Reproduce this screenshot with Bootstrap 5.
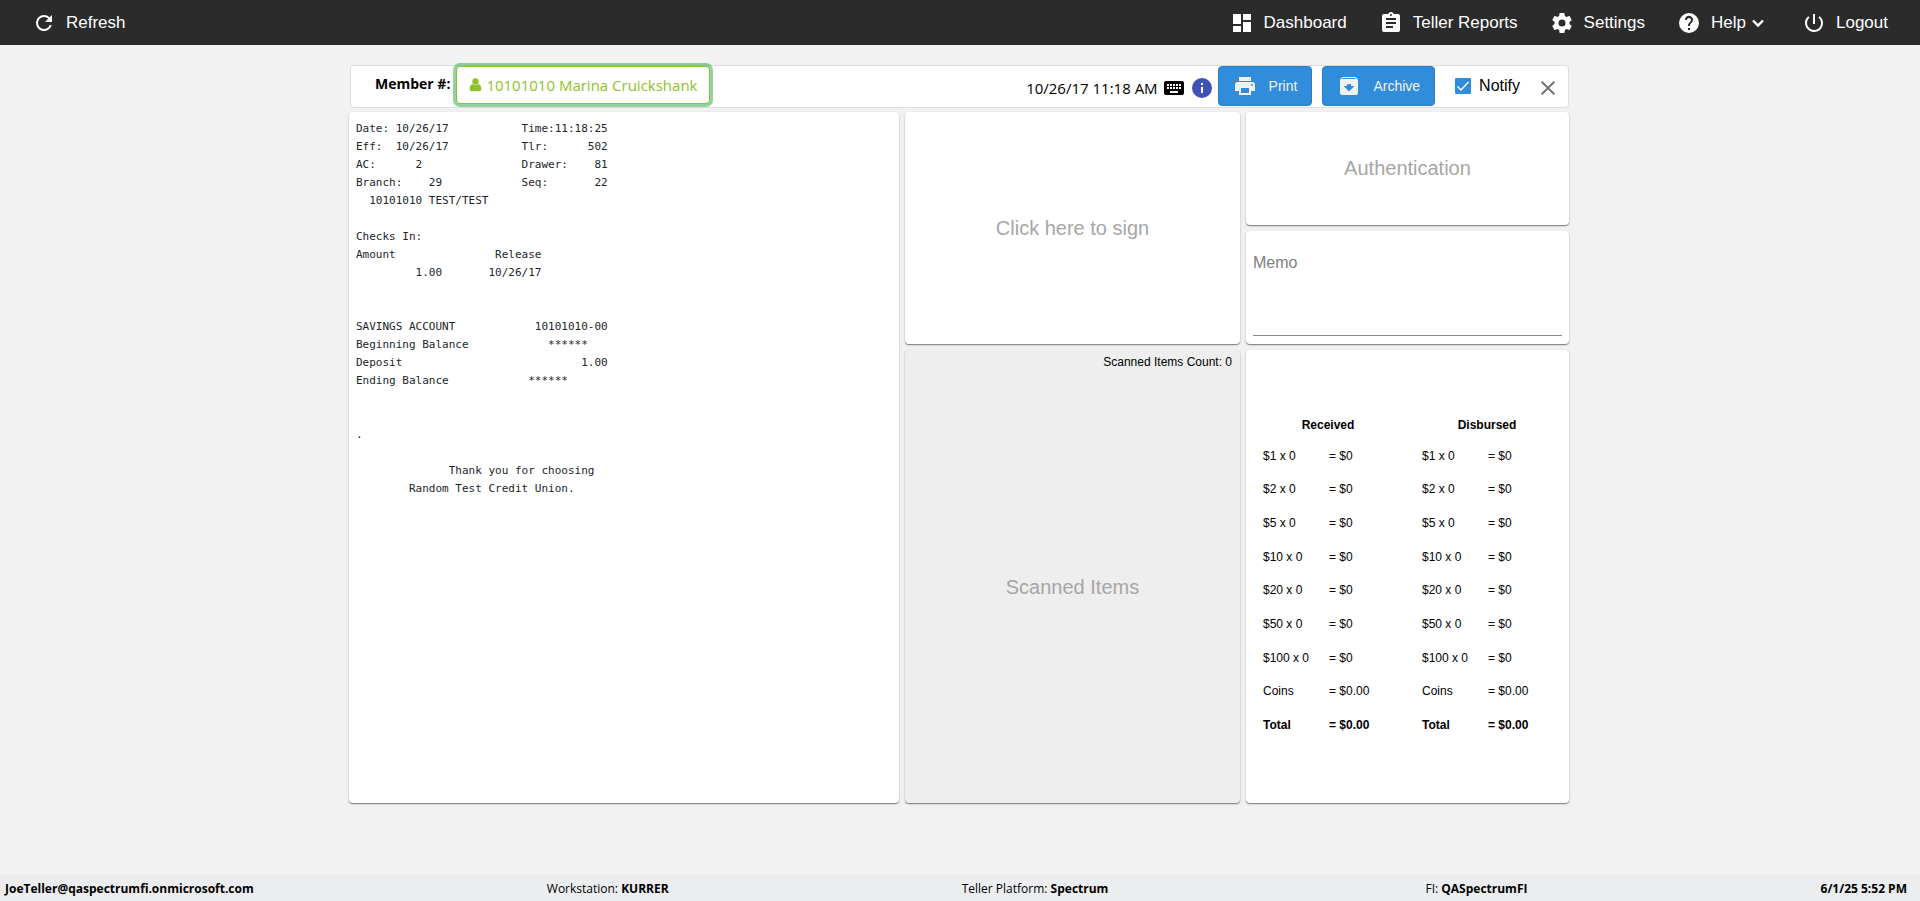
<!DOCTYPE html>
<html lang="en">
<head>
<meta charset="utf-8">
<meta name="viewport" content="width=device-width, initial-scale=1">
<title>Teller Receipt</title>
<link href="https://cdn.jsdelivr.net/npm/bootstrap@5.3.0/dist/css/bootstrap.min.css" rel="stylesheet">
<style>
  body { background: #f2f2f2; color: #000; font-family: "Liberation Sans", Arial, sans-serif; font-size: 16px; }
  .ui-face { font-family: "Open Sans", "Noto Sans", sans-serif; font-size: 15px; }

  .topbar { background: #2b2b2b; min-height: 45px; font-size: 17px; line-height: 24px; }
  .topbar .nav-link { color: #fff; padding: 7px 16px; gap: 10px; }
  .topbar .nav-link svg { fill: #fff; }

  .workspace { max-width: 1222px; padding: 20px 2px 0 0; }
  .receipt-bar { background: #fff; border: 1px solid #ddd; border-radius: 4px; min-height: 43px; margin: 0 0 4px 1px; }
  .member-group { gap: 6px; }
  .member-label { font-size: 14px; }
  .btn-member { color: #8fc12b; background: #fff; border: 1px solid #8fc12b; border-radius: 4px; height: 38px;
                padding: 0 12px; box-shadow: 0 0 0 3px rgba(40, 167, 69, .5); gap: 4px; }
  .btn-member:hover { color: #7fae22; border-color: #8fc12b; }
  .btn-action { background: #2f8ddc; border: 1px solid #2a7fc7; border-radius: 4px; color: #f2f2f2; font-size: 14px;
                height: 40px; padding: 0 14px; gap: 12px; }
  .btn-action:hover { background: #277fc9; color: #fff; }
  .btn-bare { border: 0; background: none; padding: 0; line-height: 0; }
  .bar-actions { gap: 10px; }
  .notify-box { width: 16px; height: 16px; margin: 0; }
  .notify-box[type=checkbox] { border-radius: 1px; }
  .notify-box:checked[type=checkbox] { background-color: #2f8ddc; border-color: #2f8ddc; background-size: 16px;
    background-image: url("data:image/svg+xml,%3Csvg xmlns='http://www.w3.org/2000/svg' viewBox='0 0 16 16'%3E%3Cpath d='M2.500 8.500 6 12 13.500 4' fill='none' stroke='%23fff' stroke-width='1.500'/%3E%3C/svg%3E"); }

  .board { display: grid; gap: 6px; grid-template-columns: 550fr 335fr 323fr; grid-template-rows: auto auto 1fr; }
  .panel { background: #fff; border-radius: 4px; box-shadow: 0 1px 1px rgba(0, 0, 0, .4), 0 1px 3px rgba(0, 0, 0, .16); }
  .panel-receipt { grid-row: 1 / 4; }
  .panel-sign { grid-row: 1 / 3; grid-column: 2; }
  .panel-auth { grid-column: 3; min-height: 113px; }
  .panel-memo { grid-column: 3; min-height: 113px; padding: 8px 7px; }
  .panel-scan { grid-column: 2; background: #eee; }
  .panel-cash { grid-column: 3; min-height: 453px; padding: 62px 17px 40px; gap: 29px; }
  .prompt { font-size: 20px; color: #a6a6a6; background: none; border: 0; padding: 0 0 1px; }
  .receipt-text { font-family: "DejaVu Sans Mono", monospace; font-size: 11px; line-height: 18px; color: #212529; padding: 8px 7px; }
  .memo-input { border: 0; border-bottom: 1px solid #8c8c8c; resize: none; height: 85px; padding: 0; line-height: 24px; }
  .memo-input::placeholder { color: #808080; }

  .cash-table { font-size: 12px; line-height: 18px; width: 130px; height: 330px; }
  .cash-table th, .cash-table td { padding: 0; vertical-align: middle; }
  .cash-table thead th { height: 27px; padding-top: 4px; text-align: center; vertical-align: top; }
  .cash-table td:first-child { width: 66px; }
  .scan-count { font-size: 12px; line-height: 18px; padding: 3px 8px 0; }

  .statusbar { background: #ebedef; min-height: 26px; font-size: 12px; line-height: 18px; padding: 2px 13px 0 5px; }
</style>
</head>
<body class="d-flex flex-column min-vh-100">

<nav class="topbar d-flex justify-content-between px-3">
  <a class="nav-link d-flex align-items-center" href="#">
    <svg width="24" height="24" viewBox="0 0 24 24" aria-hidden="true"><path d="M17.65 6.35A7.96 7.96 0 0 0 12 4a8 8 0 1 0 7.73 10h-2.08A6 6 0 1 1 12 6c1.66 0 3.14.69 4.22 1.78L13 11h7V4z"/></svg>
    Refresh
  </a>
  <div class="d-flex">
    <a class="nav-link d-flex align-items-center" href="#">
      <svg width="24" height="24" viewBox="0 0 24 24" aria-hidden="true"><path d="M3 13h8V3H3zm0 8h8v-6H3zm10 0h8V11h-8zm0-18v6h8V3z"/></svg>
      Dashboard
    </a>
    <a class="nav-link d-flex align-items-center" href="#">
      <svg width="24" height="24" viewBox="0 0 24 24" aria-hidden="true"><path d="M19 3h-4.18C14.4 1.84 13.3 1 12 1s-2.4.84-2.82 2H5a2 2 0 0 0-2 2v14a2 2 0 0 0 2 2h14a2 2 0 0 0 2-2V5a2 2 0 0 0-2-2zm-7 0a1 1 0 1 1 0 2 1 1 0 0 1 0-2zm2 14H7v-2h7zm3-4H7v-2h10zm0-4H7V7h10z"/></svg>
      Teller Reports
    </a>
    <a class="nav-link d-flex align-items-center" href="#">
      <svg width="24" height="24" viewBox="0 0 24 24" aria-hidden="true"><path d="M19.43 12.98c.04-.32.07-.64.07-.98s-.03-.66-.07-.98l2.11-1.65c.19-.15.24-.42.12-.64l-2-3.46c-.12-.22-.39-.3-.61-.22l-2.49 1c-.52-.4-1.08-.73-1.69-.98l-.38-2.65A.49.49 0 0 0 14 2h-4c-.25 0-.46.18-.49.42l-.38 2.65c-.61.25-1.17.59-1.69.98l-2.49-1c-.23-.09-.49 0-.61.22l-2 3.46c-.13.22-.07.49.12.64l2.11 1.65c-.04.32-.07.65-.07.98s.03.66.07.98l-2.11 1.65c-.19.15-.24.42-.12.64l2 3.46c.12.22.39.3.61.22l2.49-1c.52.4 1.08.73 1.69.98l.38 2.65c.03.24.24.42.49.42h4c.25 0 .46-.18.49-.42l.38-2.65c.61-.25 1.17-.59 1.69-.98l2.49 1c.23.09.49 0 .61-.22l2-3.46c.12-.22.07-.49-.12-.64zM12 15.5a3.5 3.5 0 1 1 0-7 3.5 3.5 0 0 1 0 7z"/></svg>
      Settings
    </a>
    <a class="nav-link d-flex align-items-center" href="#">
      <svg width="24" height="24" viewBox="0 0 24 24" aria-hidden="true"><path d="M12 2a10 10 0 1 0 0 20 10 10 0 0 0 0-20zm1 17h-2v-2h2zm2.07-7.75-.9.92C13.45 12.9 13 13.5 13 15h-2v-.5c0-1.1.45-2.1 1.17-2.83l1.24-1.26A2 2 0 1 0 10 9H8a4 4 0 1 1 7.07 2.25z"/></svg>
      <span class="d-flex align-items-center">Help
        <svg class="ms-1" width="20" height="18" viewBox="0 0 20 18" aria-hidden="true"><path d="M3 6.500 8 11.500 13 6.500" style="fill:none;stroke:#fff;stroke-width:2.400"/></svg>
      </span>
    </a>
    <a class="nav-link d-flex align-items-center" href="#">
      <svg width="24" height="24" viewBox="0 0 24 24" aria-hidden="true"><path d="M13 3h-2v10h2zm4.830 2.170-1.420 1.420A6.920 6.920 0 0 1 19 12a7 7 0 1 1-11.420-5.420L6.170 5.170A8.930 8.930 0 0 0 3 12a9 9 0 1 0 14.830-6.830z"/></svg>
      Logout
    </a>
  </div>
</nav>

<main class="workspace w-100 mx-auto flex-grow-1">
  <div class="receipt-bar d-flex align-items-start justify-content-between">
    <div class="ui-face member-group d-flex align-items-center ps-4">
      <label class="member-label fw-bold pb-1" for="member">Member #:</label>
      <button id="member" type="button" class="btn btn-member ui-face d-flex align-items-center">
        <svg width="13" height="14" viewBox="0 0 13 14" fill="currentColor" aria-hidden="true"><circle cx="6.500" cy="3.500" r="3.200"/><path d="M3.600 6C1.500 6.500.700 8.500.700 11c0 1.300.900 2.300 2.100 2.300h7.400c1.200 0 2.100-1 2.100-2.300 0-2.500-.800-4.500-2.900-5a4.300 4.300 0 0 1-5.800 0z"/></svg>
        10101010 Marina Cruickshank
      </button>
    </div>
    <div class="d-flex align-items-center">
      <span class="ui-face pt-1">10/26/17 11:18 AM</span>
      <button type="button" class="btn-bare ms-1 pt-1" aria-label="Keyboard"><svg width="24" height="24" viewBox="0 0 24 24"><path d="M20 5H4a2 2 0 0 0-2 2v10a2 2 0 0 0 2 2h16a2 2 0 0 0 2-2V7a2 2 0 0 0-2-2zm-9 3h2v2h-2zm0 3h2v2h-2zM8 8h2v2H8zm0 3h2v2H8zm-1 2H5v-2h2zm0-3H5V8h2zm9 7H8v-2h8zm0-4h-2v-2h2zm0-3h-2V8h2zm3 3h-2v-2h2zm0-3h-2V8h2z"/></svg></button>
      <button type="button" class="btn-bare ms-1 pt-1" aria-label="Info"><svg width="24" height="24" viewBox="0 0 24 24" fill="#3f51b5"><path d="M12 2a10 10 0 1 0 0 20 10 10 0 0 0 0-20zm1 15h-2v-6h2zm0-8h-2V7h2z"/></svg></button>
      <div class="bar-actions d-flex align-items-center ms-1">
        <button type="button" class="btn btn-action d-flex align-items-center">
          <svg width="24" height="24" viewBox="0 0 24 24" fill="currentColor" aria-hidden="true"><path d="M19 8H5a3 3 0 0 0-3 3v6h4v4h12v-4h4v-6a3 3 0 0 0-3-3zm-3 11H8v-5h8zm3-7a1 1 0 1 1 0-2 1 1 0 0 1 0 2zm-1-9H6v4h12z"/></svg>
          Print
        </button>
        <button type="button" class="btn btn-action d-flex align-items-center">
          <svg width="24" height="24" viewBox="0 0 24 24" fill="currentColor" aria-hidden="true"><path d="m20.540 5.230-1.390-1.680A1.450 1.450 0 0 0 18 3H6c-.470 0-.880.210-1.160.550L3.460 5.230C3.170 5.570 3 6.020 3 6.500V19a2 2 0 0 0 2 2h14a2 2 0 0 0 2-2V6.500c0-.480-.170-.930-.460-1.270zM12 17.500 6.500 12H10v-2h4v2h3.500zM5.120 5l.810-1h12l.940 1z"/></svg>
          Archive
        </button>
      </div>
      <div class="d-flex align-items-center gap-2 ms-3 ps-1">
        <input class="form-check-input notify-box" type="checkbox" id="notify" checked>
        <label for="notify">Notify</label>
      </div>
      <button type="button" class="btn-bare ms-3 me-2 pt-1" aria-label="Close"><svg width="24" height="24" viewBox="0 0 24 24" fill="#757575"><path d="M19 6.410 17.590 5 12 10.590 6.410 5 5 6.410 10.590 12 5 17.590 6.410 19 12 13.410 17.590 19 19 17.590 13.410 12z"/></svg></button>
    </div>
  </div>

  <div class="board">
    <section class="panel panel-receipt">
      <pre class="receipt-text m-0">Date: 10/26/17           Time:11:18:25
Eff:  10/26/17           Tlr:      502
AC:      2               Drawer:    81
Branch:    29            Seq:       22
  10101010 TEST/TEST

Checks In:
Amount               Release
         1.00       10/26/17


SAVINGS ACCOUNT            10101010-00
Beginning Balance            ******
Deposit                           1.00
Ending Balance            ******


.

              Thank you for choosing
        Random Test Credit Union.</pre>
    </section>
    <section class="panel panel-sign d-flex">
      <button type="button" class="prompt w-100">Click here to sign</button>
    </section>
    <section class="panel panel-auth d-flex">
      <button type="button" class="prompt w-100">Authentication</button>
    </section>
    <section class="panel panel-memo d-flex flex-column justify-content-end">
      <textarea class="memo-input w-100" aria-label="Memo" placeholder="Memo"></textarea>
    </section>
    <section class="panel panel-scan d-flex flex-column">
      <div class="scan-count text-end">Scanned Items Count: 0</div>
      <div class="prompt flex-grow-1 d-flex align-items-center justify-content-center">Scanned Items</div>
    </section>
    <section class="panel panel-cash d-flex align-items-start">
      <table class="cash-table">
        <thead><tr><th colspan="2">Received</th></tr></thead>
        <tbody>
          <tr><td>$1 x 0</td><td>= $0</td></tr>
          <tr><td>$2 x 0</td><td>= $0</td></tr>
          <tr><td>$5 x 0</td><td>= $0</td></tr>
          <tr><td>$10 x 0</td><td>= $0</td></tr>
          <tr><td>$20 x 0</td><td>= $0</td></tr>
          <tr><td>$50 x 0</td><td>= $0</td></tr>
          <tr><td>$100 x 0</td><td>= $0</td></tr>
          <tr><td>Coins</td><td>= $0.00</td></tr>
          <tr class="fw-bold"><td>Total</td><td>= $0.00</td></tr>
        </tbody>
      </table>
      <table class="cash-table">
        <thead><tr><th colspan="2">Disbursed</th></tr></thead>
        <tbody>
          <tr><td>$1 x 0</td><td>= $0</td></tr>
          <tr><td>$2 x 0</td><td>= $0</td></tr>
          <tr><td>$5 x 0</td><td>= $0</td></tr>
          <tr><td>$10 x 0</td><td>= $0</td></tr>
          <tr><td>$20 x 0</td><td>= $0</td></tr>
          <tr><td>$50 x 0</td><td>= $0</td></tr>
          <tr><td>$100 x 0</td><td>= $0</td></tr>
          <tr><td>Coins</td><td>= $0.00</td></tr>
          <tr class="fw-bold"><td>Total</td><td>= $0.00</td></tr>
        </tbody>
      </table>
    </section>
  </div>
</main>

<footer class="statusbar ui-face d-flex align-items-center justify-content-between">
  <strong>JoeTeller@qaspectrumfi.onmicrosoft.com</strong>
  <span>Workstation: <strong>KURRER</strong></span>
  <span>Teller Platform: <strong>Spectrum</strong></span>
  <span class="ps-4">FI: <strong>QASpectrumFI</strong></span>
  <strong>6/1/25 5:52 PM</strong>
</footer>

<script src="https://cdn.jsdelivr.net/npm/bootstrap@5.3.0/dist/js/bootstrap.bundle.min.js"></script>
</body>
</html>
